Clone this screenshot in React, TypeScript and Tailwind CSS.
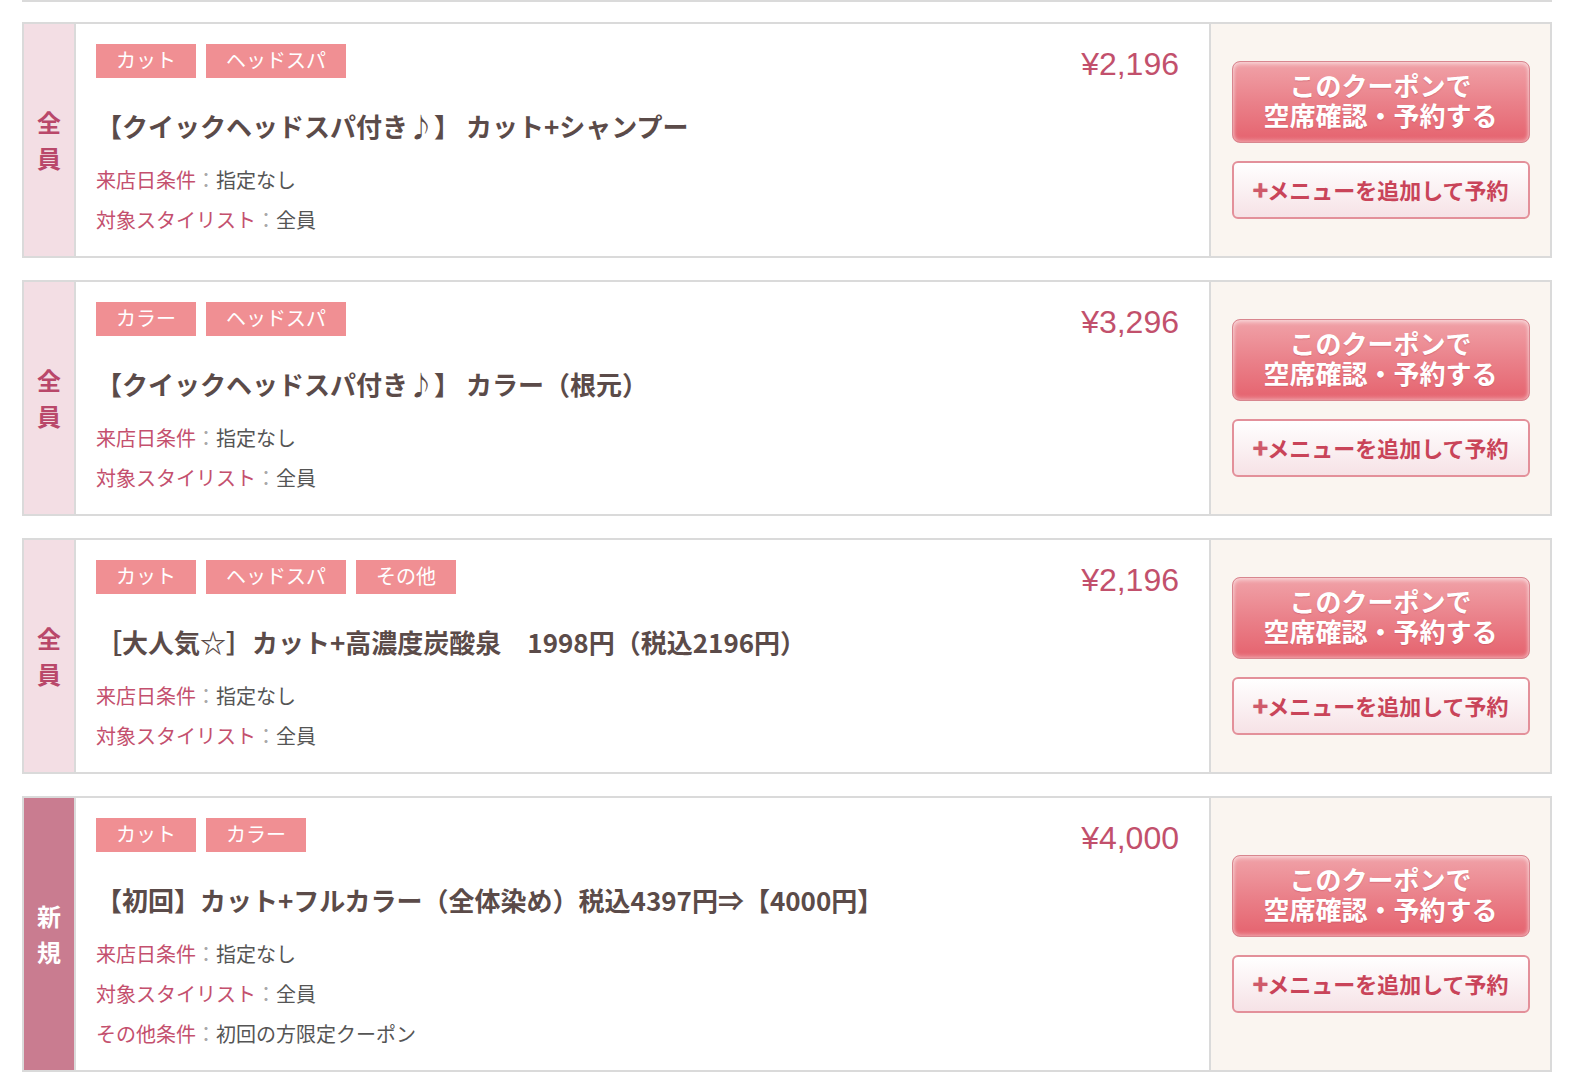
const coupons = [
  {
    badge: ['全', '員'],
    isNew: false,
    tags: ['カット', 'ヘッドスパ'],
    title: '【クイックヘッドスパ付き♪】 カット+シャンプー',
    price: '¥2,196',
    details: [
      ['来店日条件', '指定なし'],
      ['対象スタイリスト', '全員'],
    ],
  },
  {
    badge: ['全', '員'],
    isNew: false,
    tags: ['カラー', 'ヘッドスパ'],
    title: '【クイックヘッドスパ付き♪】 カラー（根元）',
    price: '¥3,296',
    details: [
      ['来店日条件', '指定なし'],
      ['対象スタイリスト', '全員'],
    ],
  },
  {
    badge: ['全', '員'],
    isNew: false,
    tags: ['カット', 'ヘッドスパ', 'その他'],
    title: '［大人気☆］カット+高濃度炭酸泉　1998円（税込2196円）',
    price: '¥2,196',
    details: [
      ['来店日条件', '指定なし'],
      ['対象スタイリスト', '全員'],
    ],
  },
  {
    badge: ['新', '規'],
    isNew: true,
    tags: ['カット', 'カラー'],
    title: '【初回】カット+フルカラー（全体染め）税込4397円⇒【4000円】',
    price: '¥4,000',
    details: [
      ['来店日条件', '指定なし'],
      ['対象スタイリスト', '全員'],
      ['その他条件', '初回の方限定クーポン'],
    ],
  },
];

type Coupon = (typeof coupons)[number];

function CouponCard({ c }: { c: Coupon }) {
  return (
    <div className="flex border-2 border-[#dadada] bg-white">
      {/* Target badge column */}
      <div
        className={
          'w-[52px] shrink-0 flex flex-col items-center justify-center border-r-2 border-[#dadada] text-[24px] leading-[36px] font-bold ' +
          (c.isNew ? 'bg-[#c97c90] text-white' : 'bg-[#f3dee4] text-[#b9486a]')
        }
      >
        {c.badge.map((ch) => (
          <span key={ch}>{ch}</span>
        ))}
      </div>

      {/* Main info */}
      <div className="flex-1 flex justify-between">
        <div className="pl-5 pt-5 pb-4">
          <div className="flex gap-[10px]">
            {c.tags.map((t) => (
              <span
                key={t}
                className="h-[34px] min-w-[100px] px-5 pb-[2px] flex items-center justify-center bg-[#f08f93] text-white text-[20px] leading-none"
              >
                {t}
              </span>
            ))}
          </div>
          <h3 className="mt-7 text-[26px] leading-[40px] font-bold text-[#5b4b49] whitespace-nowrap">{c.title}</h3>
          <div className="mt-[14px] text-[20px] leading-[40px]">
            {c.details.map(([k, v]) => (
              <div key={k} className="flex">
                <span className="text-[#c4506e]">{k}</span>
                <span className="text-[#a8a8a8]">：</span>
                <span className="text-[#555555]">{v}</span>
              </div>
            ))}
          </div>
        </div>
        <div className="pt-6 pr-[30px] text-[32px] leading-[32px] text-[#c2506c] font-['Liberation_Sans',Arial,sans-serif]">
          {c.price}
        </div>
      </div>

      {/* Actions */}
      <div className="w-[341px] shrink-0 border-l-2 border-[#dadada] bg-[#faf5f0] flex flex-col items-center justify-center gap-[18px]">
        <button className="w-[298px] h-[82px] pb-1 rounded-[8px] border border-[#d8868f] bg-linear-to-b from-[#f0a2a8] via-[#ea818a] to-[#e5626e] shadow-[inset_0_2px_4px_rgba(255,255,255,0.55),inset_0_-2px_4px_rgba(255,255,255,0.35)] text-white font-bold text-[26px] leading-[30px] flex flex-col items-center justify-center [text-shadow:0_1px_1px_rgba(180,60,80,0.35)]">
          <span className="block h-[30px]">このクーポンで</span>
          <span className="block h-[30px]">空席確認・予約する</span>
        </button>
        <button className="w-[298px] h-[58px] pb-[2px] rounded-[6px] border-2 border-[#e3909a] bg-linear-to-b from-white to-[#f6e2e6] text-[#c94459] font-bold text-[22px] leading-none flex items-center justify-center">
          <span className="text-[#cf5a6a] text-[26px] font-black -mr-[1px] [text-shadow:0_0_1px_rgba(207,90,106,0.6)]">+</span>
          メニューを追加して予約
        </button>
      </div>
    </div>
  );
}

export default function App() {
  return (
    <div className="min-h-screen bg-white font-['Noto_Sans_CJK_JP','Noto_Sans',sans-serif] pl-[22px] pr-[34px]">
      <div className="h-[2px] bg-[#dadada]" />
      <div className="mt-5 flex flex-col gap-[22px]">
        {coupons.map((c, i) => (
          <CouponCard key={i} c={c} />
        ))}
      </div>
    </div>
  );
}
